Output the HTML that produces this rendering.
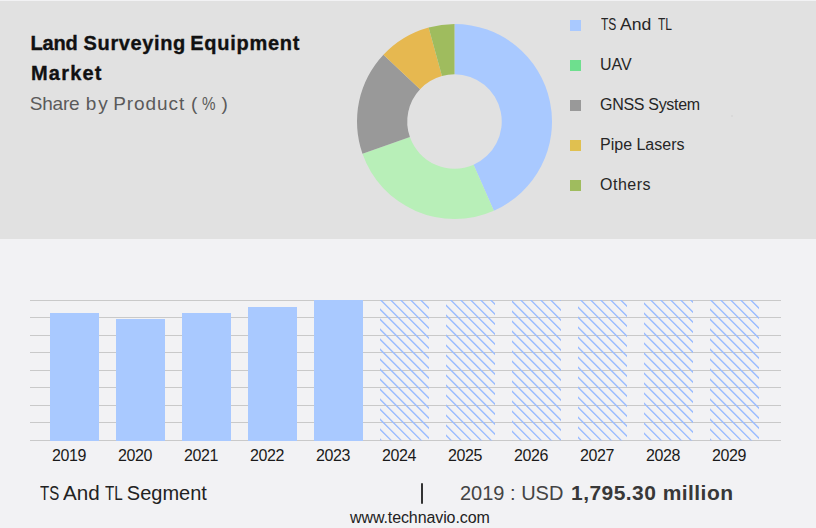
<!DOCTYPE html>
<html><head><meta charset="utf-8">
<style>
html,body{margin:0;padding:0;}
body{width:816px;height:528px;position:relative;overflow:hidden;background:#f2f2f4;font-family:"Liberation Sans",sans-serif;}
.top{position:absolute;left:0;top:1px;width:816px;height:238px;background:#e1e1e1;}
.t{position:absolute;white-space:nowrap;line-height:1;}
.title{left:31px;top:33px;font-weight:bold;font-size:20px;color:#111;letter-spacing:0.45px;-webkit-text-stroke:0.35px #111;}
.title2{left:31px;top:63px;font-weight:bold;font-size:20px;color:#111;letter-spacing:1.2px;-webkit-text-stroke:0.35px #111;}
.sub{left:30px;top:94px;font-size:19px;color:#5a5a5a;letter-spacing:0.25px;}
.leg{left:600px;font-size:16px;color:#262626;}
.sq{position:absolute;left:570px;width:11px;height:11px;}
.yr{font-size:16px;color:#1a1a1a;top:448px;letter-spacing:-0.4px;}
</style></head><body>
<div class="top"></div>
<div style="position:absolute;left:731px;top:115px;width:2px;height:2px;background:#d6d6d6;border-radius:1px"></div>
<div class="t title" style="left:30.5px;letter-spacing:-0.2px">Land</div><div class="t title" style="left:83.6px;letter-spacing:0.62px">Surveying</div><div class="t title" style="left:190.3px;letter-spacing:0.72px">Equipment</div>
<div class="t title2">Market</div>
<div class="t sub" style="left:29.7px;letter-spacing:-0.2px">Share</div><div class="t sub" style="left:85.8px;letter-spacing:2px">by</div><div class="t sub" style="left:113.3px;letter-spacing:0.9px">Product</div><div class="t sub" style="left:191px">(</div><div class="t sub" style="left:201.9px;transform:scaleX(0.8);transform-origin:0 0">%</div><div class="t sub" style="left:221.6px">)</div>

<svg style="position:absolute;left:0;top:0" width="816" height="239" viewBox="0 0 816 239">
  <g id="donut"><path d="M454.50,24.00 A97.5,97.5 0 0 1 493.85,210.71 L473.57,164.73 A47.25,47.25 0 0 0 454.50,74.25 Z" fill="#a9c9ff"/><path d="M493.85,210.71 A97.5,97.5 0 0 1 362.48,153.73 L409.91,137.12 A47.25,47.25 0 0 0 473.57,164.73 Z" fill="#b8efb8"/><path d="M362.48,153.73 A97.5,97.5 0 0 1 383.43,54.76 L420.06,89.16 A47.25,47.25 0 0 0 409.91,137.12 Z" fill="#999999"/><path d="M383.43,54.76 A97.5,97.5 0 0 1 428.61,27.50 L441.95,75.95 A47.25,47.25 0 0 0 420.06,89.16 Z" fill="#e6b850"/><path d="M428.61,27.50 A97.5,97.5 0 0 1 454.50,24.00 L454.50,74.25 A47.25,47.25 0 0 0 441.95,75.95 Z" fill="#9fbc5e"/></g>
</svg>

<div class="sq" style="top:20px;background:#a9c9ff"></div>
<div class="sq" style="top:60px;background:#6edf8e"></div>
<div class="sq" style="top:100px;background:#999999"></div>
<div class="sq" style="top:140px;background:#e0c050"></div>
<div class="sq" style="top:180px;background:#9fbc5e"></div>
<div class="t leg" style="top:17px;left:600.5px;transform:scaleX(0.75);transform-origin:0 0">TS</div><div class="t leg" style="top:17px;left:619.7px;transform:scaleX(1.10);transform-origin:0 0">And</div><div class="t leg" style="top:17px;left:657.5px;transform:scaleX(0.75);transform-origin:0 0">TL</div>
<div class="t leg" style="top:57px">UAV</div>
<div class="t leg" style="top:97px;letter-spacing:-0.3px">GNSS System</div>
<div class="t leg" style="top:137px">Pipe Lasers</div>
<div class="t leg" style="top:177px;letter-spacing:0.5px">Others</div>

<svg style="position:absolute;left:0;top:0" width="816" height="528" viewBox="0 0 816 528">
  <defs><clipPath id="c0"><rect x="380" y="300" width="49" height="140.5"/></clipPath><clipPath id="c1"><rect x="446" y="300" width="49" height="140.5"/></clipPath><clipPath id="c2"><rect x="512" y="300" width="49" height="140.5"/></clipPath><clipPath id="c3"><rect x="578" y="300" width="49" height="140.5"/></clipPath><clipPath id="c4"><rect x="644" y="300" width="49" height="140.5"/></clipPath><clipPath id="c5"><rect x="710" y="300" width="49" height="140.5"/></clipPath></defs>
  <g stroke="#c9c9c9" stroke-width="1">
    <line x1="30" x2="781" y1="300.5" y2="300.5"/>
    <line x1="30" x2="781" y1="317.5" y2="317.5"/>
    <line x1="30" x2="781" y1="335.5" y2="335.5"/>
    <line x1="30" x2="781" y1="352.5" y2="352.5"/>
    <line x1="30" x2="781" y1="370.5" y2="370.5"/>
    <line x1="30" x2="781" y1="387.5" y2="387.5"/>
    <line x1="30" x2="781" y1="405.5" y2="405.5"/>
    <line x1="30" x2="781" y1="422.5" y2="422.5"/>
    <line x1="30" x2="781" y1="440.5" y2="440.5"/>
  </g>
  <g fill="#a9c9ff">
    <rect x="50" y="313" width="49" height="128"/>
    <rect x="116" y="319" width="49" height="122"/>
    <rect x="182" y="313" width="49" height="128"/>
    <rect x="248" y="307" width="49" height="134"/>
    <rect x="314" y="300" width="49" height="141"/>
  </g>
  <g id="hatchg" stroke="#99bbff" stroke-width="1.3" fill="none"><path clip-path="url(#c0)" d="M218.75,298 L363.25,442.5 M228.75,298 L373.25,442.5 M238.75,298 L383.25,442.5 M248.75,298 L393.25,442.5 M258.75,298 L403.25,442.5 M268.75,298 L413.25,442.5 M278.75,298 L423.25,442.5 M288.75,298 L433.25,442.5 M298.75,298 L443.25,442.5 M308.75,298 L453.25,442.5 M318.75,298 L463.25,442.5 M328.75,298 L473.25,442.5 M338.75,298 L483.25,442.5 M348.75,298 L493.25,442.5 M358.75,298 L503.25,442.5 M368.75,298 L513.25,442.5 M378.75,298 L523.25,442.5 M388.75,298 L533.25,442.5 M398.75,298 L543.25,442.5 M408.75,298 L553.25,442.5 M418.75,298 L563.25,442.5 M428.75,298 L573.25,442.5"/><path clip-path="url(#c1)" d="M288.75,298 L433.25,442.5 M298.75,298 L443.25,442.5 M308.75,298 L453.25,442.5 M318.75,298 L463.25,442.5 M328.75,298 L473.25,442.5 M338.75,298 L483.25,442.5 M348.75,298 L493.25,442.5 M358.75,298 L503.25,442.5 M368.75,298 L513.25,442.5 M378.75,298 L523.25,442.5 M388.75,298 L533.25,442.5 M398.75,298 L543.25,442.5 M408.75,298 L553.25,442.5 M418.75,298 L563.25,442.5 M428.75,298 L573.25,442.5 M438.75,298 L583.25,442.5 M448.75,298 L593.25,442.5 M458.75,298 L603.25,442.5 M468.75,298 L613.25,442.5 M478.75,298 L623.25,442.5 M488.75,298 L633.25,442.5 M498.75,298 L643.25,442.5"/><path clip-path="url(#c2)" d="M358.75,298 L503.25,442.5 M368.75,298 L513.25,442.5 M378.75,298 L523.25,442.5 M388.75,298 L533.25,442.5 M398.75,298 L543.25,442.5 M408.75,298 L553.25,442.5 M418.75,298 L563.25,442.5 M428.75,298 L573.25,442.5 M438.75,298 L583.25,442.5 M448.75,298 L593.25,442.5 M458.75,298 L603.25,442.5 M468.75,298 L613.25,442.5 M478.75,298 L623.25,442.5 M488.75,298 L633.25,442.5 M498.75,298 L643.25,442.5 M508.75,298 L653.25,442.5 M518.75,298 L663.25,442.5 M528.75,298 L673.25,442.5 M538.75,298 L683.25,442.5 M548.75,298 L693.25,442.5 M558.75,298 L703.25,442.5 M568.75,298 L713.25,442.5"/><path clip-path="url(#c3)" d="M418.75,298 L563.25,442.5 M428.75,298 L573.25,442.5 M438.75,298 L583.25,442.5 M448.75,298 L593.25,442.5 M458.75,298 L603.25,442.5 M468.75,298 L613.25,442.5 M478.75,298 L623.25,442.5 M488.75,298 L633.25,442.5 M498.75,298 L643.25,442.5 M508.75,298 L653.25,442.5 M518.75,298 L663.25,442.5 M528.75,298 L673.25,442.5 M538.75,298 L683.25,442.5 M548.75,298 L693.25,442.5 M558.75,298 L703.25,442.5 M568.75,298 L713.25,442.5 M578.75,298 L723.25,442.5 M588.75,298 L733.25,442.5 M598.75,298 L743.25,442.5 M608.75,298 L753.25,442.5 M618.75,298 L763.25,442.5 M628.75,298 L773.25,442.5"/><path clip-path="url(#c4)" d="M488.75,298 L633.25,442.5 M498.75,298 L643.25,442.5 M508.75,298 L653.25,442.5 M518.75,298 L663.25,442.5 M528.75,298 L673.25,442.5 M538.75,298 L683.25,442.5 M548.75,298 L693.25,442.5 M558.75,298 L703.25,442.5 M568.75,298 L713.25,442.5 M578.75,298 L723.25,442.5 M588.75,298 L733.25,442.5 M598.75,298 L743.25,442.5 M608.75,298 L753.25,442.5 M618.75,298 L763.25,442.5 M628.75,298 L773.25,442.5 M638.75,298 L783.25,442.5 M648.75,298 L793.25,442.5 M658.75,298 L803.25,442.5 M668.75,298 L813.25,442.5 M678.75,298 L823.25,442.5 M688.75,298 L833.25,442.5 M698.75,298 L843.25,442.5"/><path clip-path="url(#c5)" d="M548.75,298 L693.25,442.5 M558.75,298 L703.25,442.5 M568.75,298 L713.25,442.5 M578.75,298 L723.25,442.5 M588.75,298 L733.25,442.5 M598.75,298 L743.25,442.5 M608.75,298 L753.25,442.5 M618.75,298 L763.25,442.5 M628.75,298 L773.25,442.5 M638.75,298 L783.25,442.5 M648.75,298 L793.25,442.5 M658.75,298 L803.25,442.5 M668.75,298 L813.25,442.5 M678.75,298 L823.25,442.5 M688.75,298 L833.25,442.5 M698.75,298 L843.25,442.5 M708.75,298 L853.25,442.5 M718.75,298 L863.25,442.5 M728.75,298 L873.25,442.5 M738.75,298 L883.25,442.5 M748.75,298 L893.25,442.5 M758.75,298 L903.25,442.5"/></g>
</svg>

<div class="t yr" style="left:52px">2019</div>
<div class="t yr" style="left:118px">2020</div>
<div class="t yr" style="left:184px">2021</div>
<div class="t yr" style="left:250px">2022</div>
<div class="t yr" style="left:316px">2023</div>
<div class="t yr" style="left:382px">2024</div>
<div class="t yr" style="left:448px">2025</div>
<div class="t yr" style="left:514px">2026</div>
<div class="t yr" style="left:580px">2027</div>
<div class="t yr" style="left:646px">2028</div>
<div class="t yr" style="left:712px">2029</div>

<div class="t" style="left:40.4px;top:483px;font-size:20px;color:#222;transform-origin:0 0;transform:scaleX(0.75)">TS</div><div class="t" style="left:62.5px;top:483px;font-size:20px;color:#222;transform-origin:0 0;transform:scaleX(1.03)">And</div><div class="t" style="left:105.2px;top:483px;font-size:20px;color:#222;transform-origin:0 0;transform:scaleX(0.76)">TL</div><div class="t" style="left:126.8px;top:483px;font-size:20px;color:#222;transform-origin:0 0;">Segment</div>
<div style="position:absolute;left:421px;top:483px;width:2px;height:21px;background:#333;border-radius:1px"></div>
<div class="t" style="left:460px;top:483px;font-size:20px;color:#444">2019 : USD</div>
<div class="t" style="left:571px;top:482px;font-size:21px;color:#383838;font-weight:bold;letter-spacing:0.45px">1,795.30 million</div>
<div class="t" style="left:350px;top:510px;font-size:16px;color:#222;letter-spacing:-0.1px">www.technavio.com</div>
</body></html>
